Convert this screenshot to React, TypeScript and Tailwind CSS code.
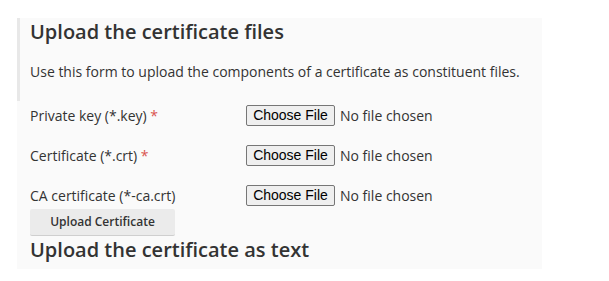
import React from 'react';

function FileField({ label, required }: { label: string; required?: boolean }) {
  return (
    <div className="flex items-center h-[40px]">
      <label className="w-[216px] text-[14px] text-[#333]">
        {label}
        {required && <span className="text-[#d9534f]"> *</span>}
      </label>
      <div className="flex items-center">
        <button
          type="button"
          className="h-[21px] w-[89px] border border-[#767676] rounded-[2px] bg-[#efefef] text-[14px] text-black leading-none font-['Liberation_Sans',Arial,sans-serif]"
        >
          Choose File
        </button>
        <span className="ml-[5px] text-[14px] text-[#333]">No file chosen</span>
      </div>
    </div>
  );
}

export default function App() {
  return (
    <div className="w-[609px] h-[281px] bg-white font-['Open_Sans',sans-serif] pt-[18px] pl-[17px]">
      <div className="w-[525px] h-[251px] bg-[#fafafa] flex flex-col">
        <div className="border-l-[3px] border-[#e8e8e8] pl-[10px] h-[83px]">
          <h2 className="text-[20px] font-semibold text-[#333] leading-[28px]">
            Upload the certificate files
          </h2>
          <p className="text-[14px] text-[#333] mt-[15px]">
            Use this form to upload the components of a certificate as constituent files.
          </p>
        </div>
        <div className="pl-[13px] mt-[-6px] flex flex-col items-start">
          <FileField label="Private key (*.key)" required />
          <FileField label="Certificate (*.crt)" required />
          <FileField label="CA certificate (*-ca.crt)" />
          <button
            type="button"
            className="mt-[-6px] w-[145px] h-[27px] bg-[#ebebeb] border-b border-[#cfcfcf] rounded-[2px] text-[12px] font-semibold text-[#333]"
          >
            Upload Certificate
          </button>
          <h2 className="text-[20px] font-semibold text-[#333] leading-[26px] mt-[1px]">
            Upload the certificate as text
          </h2>
        </div>
      </div>
    </div>
  );
}
